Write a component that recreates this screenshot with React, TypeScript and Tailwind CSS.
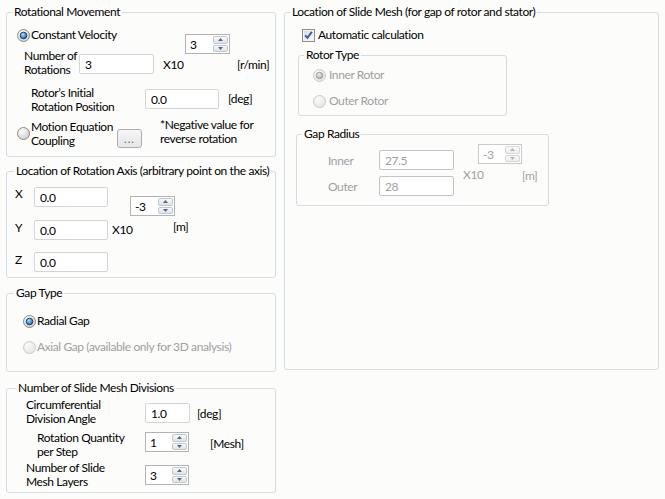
import React from "react";

function Radio({ id, checked, disabled }: { id: string; checked?: boolean; disabled?: boolean }) {
  return (
    <svg width="13" height="13" viewBox="0 0 13 13" className="shrink-0">
      <defs>
        <radialGradient id={id + "o"} cx="0.35" cy="0.3" r="0.75">
          <stop offset="0" stopColor={disabled ? "#fafafa" : "#ffffff"} />
          <stop offset="1" stopColor={disabled ? "#e6e6e6" : "#cdcdcd"} />
        </radialGradient>
        <radialGradient id={id + "d"} cx="0.4" cy="0.35" r="0.65">
          <stop offset="0" stopColor={disabled ? "#ececec" : "#9fe6ff"} />
          <stop offset="1" stopColor={disabled ? "#a9a9a9" : "#1b62ac"} />
        </radialGradient>
      </defs>
      <circle cx="6.5" cy="6.5" r="6" fill={`url(#${id}o)`} stroke={disabled ? "#c9c9c9" : "#8a8b8c"} />
      {checked && (
        <circle
          cx="6.5"
          cy="6.5"
          r="3.3"
          fill={`url(#${id}d)`}
          stroke={disabled ? "#9d9d9d" : "#1d3557"}
          strokeWidth="0.9"
        />
      )}
    </svg>
  );
}

function Checkbox() {
  return (
    <svg width="13" height="13" viewBox="0 0 13 13" className="shrink-0">
      <defs>
        <linearGradient id="cbg" x1="0" y1="0" x2="1" y2="1">
          <stop offset="0" stopColor="#d9dde3" />
          <stop offset="1" stopColor="#f6f7f8" />
        </linearGradient>
      </defs>
      <rect x="0.5" y="0.5" width="12" height="12" fill="#f4f4f4" stroke="#8e8f8f" />
      <rect x="2" y="2" width="9" height="9" fill="url(#cbg)" />
      <path d="M3.2 6.3 L5.4 8.8 L9.9 2.9" stroke="#3a57a6" strokeWidth="1.9" fill="none" />
    </svg>
  );
}

function Arrow({ up, disabled }: { up?: boolean; disabled?: boolean }) {
  return (
    <svg width="5" height="3" viewBox="0 0 5 3">
      <polygon points={up ? "0,3 2.5,0 5,3" : "0,0 5,0 2.5,3"} fill={disabled ? "#b4b4b4" : "#4a6895"} />
    </svg>
  );
}

function Spin({ value, disabled, className }: { value: string; disabled?: boolean; className: string }) {
  return (
    <div
      className={`flex h-[20px] shrink-0 border bg-white ${
        disabled ? "border-[#c9c9c9] text-[#a0a0a0]" : "border-[#b3b3b3] text-black"
      } ${className}`}
    >
      <span className="flex flex-1 items-center pl-[4px]">{value}</span>
      <div className="flex w-[16px] flex-col gap-[1px] py-[1px] pr-[1px]">
        {[true, false].map((u) => (
          <div
            key={String(u)}
            className={`flex flex-1 items-center justify-center rounded-[2px] border bg-gradient-to-b ${
              disabled
                ? "border-[#d6d6d6] from-[#fbfbfb] to-[#eeeeee]"
                : "border-[#c3c8cf] from-[#f9f9f9] to-[#dfe2e6]"
            }`}
          >
            <Arrow up={u} disabled={disabled} />
          </div>
        ))}
      </div>
    </div>
  );
}

function Field({ value, disabled, className }: { value: string; disabled?: boolean; className: string }) {
  return (
    <div
      className={`flex h-[20px] shrink-0 items-center rounded-[2px] border bg-white pl-[5px] ${
        disabled ? "border-[#c4c4c4] text-[#a0a0a0]" : "border-[#d4d4d4] text-black"
      } ${className}`}
    >
      {value}
    </div>
  );
}

function Group({
  title,
  titleClass,
  className,
  children,
}: {
  title: string;
  titleClass: string;
  className: string;
  children?: React.ReactNode;
}) {
  return (
    <div className={`relative shrink-0 rounded-[3px] border border-[#d3dde4] ${className}`}>
      <span className={`absolute -top-[8px] whitespace-nowrap bg-[#fcfdfb] px-[2px] leading-[14px] text-black ${titleClass}`}>
        {title}
      </span>
      {children}
    </div>
  );
}

export default function App() {
  return (
    <div className="flex h-[499px] w-[665px] overflow-hidden whitespace-nowrap bg-[#fcfdfb] pt-[12px] text-[12px] leading-[13px] tracking-[-0.4px] text-black [font-family:Lato,'Liberation_Sans',sans-serif]">
      {/* Left column */}
      <div className="ml-[6px] flex w-[270px] flex-col">
        {/* Rotational Movement */}
        <Group title="Rotational Movement" titleClass="left-[5px]" className="h-[145px] pt-[15px]">
          <div className="flex">
            <div className="ml-[10px] flex h-[14px] w-[168px] items-center gap-[1px] leading-[14px]">
              <Radio id="r1" checked />
              <span>Constant Velocity</span>
            </div>
            <Spin value="3" className="mt-[6px] w-[45px]" />
          </div>
          <div className="-mt-[4px] flex">
            <div className="-mt-[1px] ml-[17px] w-[55px] shrink-0 leading-[14px]">
              Number of
              <br />
              Rotations
            </div>
            <Field value="3" className="mt-[4px] w-[75px]" />
            <div className="ml-[9px] mt-[8px] w-[74px] shrink-0">X10</div>
            <div className="mt-[8px]">[r/min]</div>
          </div>
          <div className="mt-[10px] flex">
            <div className="-mt-[1px] ml-[24px] w-[114px] shrink-0 leading-[14px]">
              Rotor’s Initial
              <br />
              Rotation Position
            </div>
            <Field value="0.0" className="mt-[2px] w-[74px]" />
            <div className="ml-[9px] mt-[5px]">[deg]</div>
          </div>
          <div className="mt-[5px] flex">
            <div className="ml-[10px] mt-[8px] shrink-0">
              <Radio id="r2" />
            </div>
            <div className="ml-[1px] mt-[1px] w-[86px] shrink-0 leading-[14px]">
              Motion Equation
              <br />
              Coupling
            </div>
            <div className="mt-[10px] flex h-[19px] w-[25px] shrink-0 items-center justify-center rounded-[3px] border border-[#adadad] bg-gradient-to-b from-[#f6f6f6] to-[#e6e6e6] text-[11px] tracking-[1px] text-[#666]">
              ...
            </div>
            <div className="-mt-[1px] ml-[18px] leading-[14px]">
              *Negative value for
              <br />
              reverse rotation
            </div>
          </div>
        </Group>

        {/* Location of Rotation Axis */}
        <Group
          title="Location of Rotation Axis (arbitrary point on the axis)"
          titleClass="left-[7px]"
          className="mt-[14px] h-[107px] pt-[15px]"
        >
          <div className="flex">
            <div className="ml-[8px] w-[19px] shrink-0">X</div>
            <Field value="0.0" className="w-[74px]" />
            <Spin value="-3" className="ml-[22px] mt-[9px] w-[45px]" />
          </div>
          <div className="mt-[4px] flex">
            <div className="ml-[8px] mt-[1px] w-[19px] shrink-0">Y</div>
            <Field value="0.0" className="w-[74px]" />
            <div className="ml-[4px] mt-[3px] w-[61px] shrink-0">X10</div>
            <div>[m]</div>
          </div>
          <div className="mt-[12px] flex">
            <div className="ml-[8px] mt-[1px] w-[19px] shrink-0">Z</div>
            <Field value="0.0" className="w-[74px]" />
          </div>
        </Group>

        {/* Gap Type */}
        <Group title="Gap Type" titleClass="left-[7px]" className="mt-[15px] h-[79px] pt-[20px]">
          <div className="ml-[16px] flex h-[14px] items-center gap-[1px] leading-[14px]">
            <Radio id="r3" checked />
            <span>Radial Gap</span>
          </div>
          <div className="ml-[16px] mt-[12px] flex h-[14px] items-center gap-[1px] leading-[14px] text-[#a0a0a0]">
            <Radio id="r4" disabled />
            <span>Axial Gap (available only for 3D analysis)</span>
          </div>
        </Group>

        {/* Number of Slide Mesh Divisions */}
        <Group
          title="Number of Slide Mesh Divisions"
          titleClass="left-[9px]"
          className="mt-[16px] h-[105px] pt-[10px]"
        >
          <div className="flex">
            <div className="-mt-[1px] ml-[19px] w-[119px] shrink-0 leading-[14px]">
              Circumferential
              <br />
              Division Angle
            </div>
            <Field value="1.0" className="mt-[4px] w-[45px]" />
            <div className="ml-[7px] mt-[8px]">[deg]</div>
          </div>
          <div className="mt-[6px] flex">
            <div className="-mt-[1px] ml-[30px] w-[108px] shrink-0 leading-[14px]">
              Rotation Quantity
              <br />
              per Step
            </div>
            <Spin value="1" className="w-[44px]" />
            <div className="ml-[21px] mt-[5px]">[Mesh]</div>
          </div>
          <div className="mt-[3px] flex">
            <div className="-mt-[1px] ml-[19px] w-[119px] shrink-0 leading-[14px]">
              Number of Slide
              <br />
              Mesh Layers
            </div>
            <Spin value="3" className="mt-[3px] w-[44px]" />
          </div>
        </Group>
      </div>

      {/* Right column */}
      <Group
        title="Location of Slide Mesh (for gap of rotor and stator)"
        titleClass="left-[5px]"
        className="ml-[8px] h-[358px] w-[375px] pt-[15px]"
      >
        <div className="ml-[17px] flex h-[14px] items-center gap-[3px] leading-[14px]">
          <Checkbox />
          <span>Automatic calculation</span>
        </div>

        <Group title="Rotor Type" titleClass="left-[5px]" className="ml-[13px] mt-[13px] h-[61px] w-[209px] pt-[12px]">
          <div className="ml-[14px] flex h-[14px] items-center gap-[3px] leading-[14px] text-[#a0a0a0]">
            <Radio id="r5" checked disabled />
            <span>Inner Rotor</span>
          </div>
          <div className="ml-[14px] mt-[12px] flex h-[14px] items-center gap-[3px] leading-[14px] text-[#a0a0a0]">
            <Radio id="r6" disabled />
            <span>Outer Rotor</span>
          </div>
        </Group>

        <Group title="Gap Radius" titleClass="left-[5px]" className="ml-[11px] mt-[18px] h-[72px] w-[253px] pt-[9px]">
          <div className="flex text-[#a0a0a0]">
            <div className="ml-[31px] mt-[10px] w-[51px] shrink-0">Inner</div>
            <Field value="27.5" disabled className="mt-[6px] w-[75px]" />
            <Spin value="-3" disabled className="ml-[24px] w-[44px]" />
          </div>
          <div className="-mt-[2px] flex text-[#a0a0a0]">
            <div className="ml-[31px] mt-[12px] w-[51px] shrink-0">Outer</div>
            <Field value="28" disabled className="mt-[8px] w-[75px]" />
            <div className="ml-[9px] w-[59px] shrink-0">X10</div>
            <div className="mt-[1px]">[m]</div>
          </div>
        </Group>
      </Group>
    </div>
  );
}
